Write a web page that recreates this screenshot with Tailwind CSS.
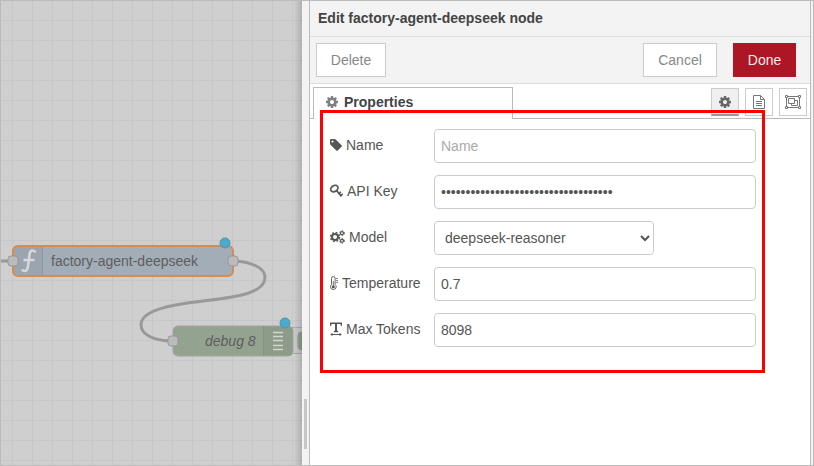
<!DOCTYPE html>
<html lang="en">
<head>
  <meta charset="UTF-8">
  <meta name="viewport" content="width=device-width, initial-scale=1.0">
  <title>Edit factory-agent-deepseek node</title>
  <script src="https://cdn.jsdelivr.net/npm/@tailwindcss/browser@4"></script>
</head>
<body class="h-screen flex overflow-hidden border border-[#bbb] bg-[#f3f3f3] font-['Liberation_Sans',Arial,sans-serif] text-sm text-[#555]">

<!-- Shared icons -->
<svg class="hidden">
  <symbol id="icon-cog" viewBox="0 0 1792 1792">
    <path d="M1152 896q0-106-75-181t-181-75-181 75-75 181 75 181 181 75 181-75 75-181zm512-109v222q0 12-8 23t-20 13l-185 28q-19 54-39 91 35 50 107 138 10 12 10 25t-9 23q-27 37-99 108t-94 71q-12 0-26-9l-138-108q-44 23-91 38-16 136-29 186-7 28-36 28h-222q-14 0-24.5-8.5t-11.5-21.5l-28-184q-49-16-90-37l-141 107q-10 9-25 9-14 0-25-11-126-114-165-168-7-10-7-23 0-12 8-23 15-21 51-66.5t54-70.5q-27-50-41-99l-183-27q-13-2-21-12.5t-8-23.5v-222q0-12 8-23t19-13l186-28q14-46 39-92-40-57-107-138-10-12-10-24 0-10 9-23 26-36 98.5-107.5t94.5-71.5q13 0 26 10l138 107q44-23 91-38 16-136 29-186 7-28 36-28h222q14 0 24.5 8.5t11.5 21.5l28 184q49 16 90 37l142-107q9-9 24-9 13 0 25 10 129 119 165 170 7 8 7 22 0 12-8 23-15 21-51 66.5t-54 70.5q26 50 41 98l183 28q13 2 21 12.5t8 23.5z"/>
  </symbol>
</svg>

<!-- Workspace -->
<main class="relative flex-1 min-w-0 overflow-hidden border-l border-[#c4c4c4] bg-[#cfcfcf] -ml-px">
  <svg class="block w-full h-full" font-size="14">
    <defs>
      <pattern id="grid" x="11" y="19" width="20" height="20" patternUnits="userSpaceOnUse">
        <path d="M0 .5H20M.5 0V20" fill="none" stroke="#c7c7c7"/>
      </pattern>
    </defs>
    <rect width="100%" height="100%" fill="url(#grid)"/>

    <g transform="translate(-1 -1)">
      <!-- Wires -->
      <g fill="none" stroke="#999" stroke-width="3">
        <path d="M0 261H12"/>
        <path d="M234 261C252 262 265 268 265 277C265 294 235 297 203 301C170 305 141 310 141 325C141 335 155 341 172 341"/>
      </g>

      <!-- factory-agent-deepseek -->
      <rect x="13" y="246" width="220" height="30" rx="5" fill="#a3adb7" stroke="#d38d50" stroke-width="2"/>
      <path d="M14 251q0-4 4-4H42V275H18q-4 0-4-4z" fill="#9ba4af"/>
      <path d="M42.500 247V275" stroke="#8f98a2"/>
      <path d="M35.500 252.500Q34.500 250.500 32.500 250.500Q30 250.500 29.500 254.500L28 266Q27.300 271 24.800 271Q23 271 22 269.500M23.500 260H34.500" fill="none" stroke="#d6d8da" stroke-width="2.600"/>
      <text x="51" y="266" fill="#5e5e5e">factory-agent-deepseek</text>
      <g fill="#bbb" stroke="#979797">
        <rect x="8" y="256" width="10" height="10" rx="3"/>
        <rect x="228" y="256" width="10" height="10" rx="3"/>
      </g>
      <circle cx="225" cy="243" r="5" fill="#4aaacf" stroke="#5c8fa5"/>

      <!-- debug 8 -->
      <rect x="288" y="327.500" width="30" height="26" rx="4" fill="#cacaca" stroke="#aaa"/>
      <rect x="298" y="332" width="16" height="18" rx="4" fill="#93a28f" stroke="#999"/>
      <rect x="173" y="326" width="120" height="30" rx="5" fill="#94a390" stroke="#a2a5a1"/>
      <path d="M264 326.500H288q4.500 0 4.500 4.500V351q0 4.500-4.500 4.500H264z" fill="#8d9c89"/>
      <path d="M263.500 326V356" stroke="#849281"/>
      <path d="M273 332.500H283M273 336.500H283M273 340.500H283M273 345.500H283M273 349.500H283" stroke="#d3d6d2" stroke-width="1.500"/>
      <text x="205" y="346" fill="#5e5e5e" font-style="italic">debug 8</text>
      <rect x="168" y="336" width="10" height="10" rx="3" fill="#bbb" stroke="#979797"/>
      <circle cx="285" cy="323" r="5" fill="#4aaacf" stroke="#5c8fa5"/>
    </g>
  </svg>
  <div class="absolute inset-y-0 right-0 w-2 bg-linear-to-r from-transparent to-black/15"></div>
</main>

<!-- Resize handle -->
<div class="flex w-[7px] shrink-0 flex-col items-center justify-end bg-[#f3f3f3] pb-4">
  <div class="h-[50px] w-[3px] bg-[#c6c6c6]"></div>
</div>

<!-- Edit tray -->
<section class="flex w-[502px] shrink-0 flex-col border-x border-[#bbb] bg-white mr-[2px]">
  <header class="h-9 border-b border-[#ddd] bg-[#f3f3f3] px-2 leading-[34px]">
    <h1 class="font-bold text-[#444]">Edit factory-agent-deepseek node</h1>
  </header>

  <div class="flex h-[47px] items-center border-b border-[#ddd] bg-[#f3f3f3] pl-1.5 pr-3.5">
    <button type="button" class="mr-auto h-[34px] w-[70px] border border-[#ccc] bg-white text-[#888]">Delete</button>
    <button type="button" class="mr-4 h-[34px] w-[74px] border border-[#ccc] bg-white text-[#888]">Cancel</button>
    <button type="button" class="h-[34px] w-[63px] bg-[#ad1625] text-[#eee]">Done</button>
  </div>

  <!-- Tabs -->
  <div class="flex h-[35px]">
    <div class="w-[3px] border-b border-[#bbb]"></div>
    <a href="#properties" class="mt-[3px] flex w-[200px] items-center gap-[5px] border border-b-0 border-[#bbb] bg-white pb-[3px] pl-[11px] font-bold text-[#444]">
      <svg class="size-[14px] fill-[#808080]"><use href="#icon-cog"/></svg>
      Properties
    </a>
    <div class="flex flex-1 items-start justify-end gap-1.5 border-b border-[#bbb] pr-[3px] pt-1">
      <button type="button" aria-label="Properties" class="grid h-7 w-7 place-items-center border border-b-2 border-[#ccc] border-b-[#999] bg-[#efefef]">
        <svg class="size-[14px] fill-[#666]"><use href="#icon-cog"/></svg>
      </button>
      <button type="button" aria-label="Description" class="grid h-7 w-7 place-items-center border border-[#ccc] bg-white">
        <svg class="h-[14px] w-3" viewBox="0 0 12 14" fill="none" stroke="#777"><path d="M.5.5H7.500L11.500 4.500V13.500H.5zM7.500.5V4.500H11.500M3 6.500H9M3 8.500H9M3 10.500H9"/></svg>
      </button>
      <button type="button" aria-label="Appearance" class="grid h-7 w-7 place-items-center border border-[#ccc] bg-white">
        <svg class="h-[14px] w-4" viewBox="0 0 16 14" fill="none" stroke="#777"><path d="M2.500 1.500H13.500M2.500 12.500H13.500M1.500 2.500V11.500M14.500 2.500V11.500M3.500 3.500H9.500V8.500H3.500zM9.500 5.500H12.500V10.500H6.500V8.500"/><path fill="#fff" d="M.5.5H2.500V2.500H.5zM13.500.5H15.500V2.500H13.500zM.5 11.500H2.500V13.500H.5zM13.500 11.500H15.500V13.500H13.500z"/></svg>
      </button>
    </div>
  </div>

  <!-- Properties form -->
  <form id="properties" class="relative flex flex-col gap-3 px-5 pt-2.5 pb-[26px]">
    <div class="flex h-[34px]">
      <label for="name" class="flex w-[104px] shrink-0 items-center gap-1 pb-0.5 whitespace-nowrap">
        <svg class="h-[14px] w-3 fill-[#555]" viewBox="128 0 1536 1792"><path d="M576 448q0-53-37.500-90.500t-90.500-37.500-90.500 37.500-37.500 90.500 37.500 90.500 90.500 37.500 90.500-37.500 37.500-90.500zm1067 576q0 53-37 90l-491 492q-39 37-91 37-53 0-90-37l-715-716q-38-37-64.500-101t-26.500-117v-416q0-52 38-90t90-38h416q53 0 117 26.500t102 64.500l715 714q37 39 37 91z"/></svg>
        Name
      </label>
      <input id="name" type="text" placeholder="Name" class="w-[70%] rounded border border-[#ccc] px-1.5 placeholder:text-[#aaa]">
    </div>
    <div class="flex h-[34px]">
      <label for="api-key" class="flex w-[104px] shrink-0 items-center gap-1 pb-0.5 whitespace-nowrap">
        <svg class="h-[14px] w-[13px]" viewBox="0 0 13 14" fill="none" stroke="#555"><ellipse cx="4.300" cy="4.600" rx="3.900" ry="2.900" stroke-width="1.700" transform="rotate(-35 4.300 4.600)"/><path stroke-width="1.800" d="M6.500 6.500L11.500 12.300"/><path stroke-width="1.500" d="M8.800 9.600L11 7.700M10.600 11.800L12.900 9.800"/></svg>
        API Key
      </label>
      <input id="api-key" type="password" value="sk-00000000000000000000000000000000" class="w-[70%] rounded border border-[#ccc] px-1.5">
    </div>
    <div class="flex h-[34px]">
      <label for="model" class="flex w-[104px] shrink-0 items-center gap-1 pb-0.5 whitespace-nowrap">
        <svg class="h-[14px] w-[15px]" viewBox="0 0 15 14" fill="none" stroke="#555"><circle cx="5" cy="7" r="3" stroke-width="2"/><circle cx="5" cy="7" r="4.500" stroke-width="1.500" stroke-dasharray="1.770 1.770"/><circle cx="12" cy="3.200" r="1.500" stroke-width="1.200"/><circle cx="12" cy="3.200" r="2.400" stroke-width="1" stroke-dasharray="1.250 1.250"/><circle cx="12" cy="10.800" r="1.500" stroke-width="1.200"/><circle cx="12" cy="10.800" r="2.400" stroke-width="1" stroke-dasharray="1.250 1.250"/></svg>
        Model
      </label>
      <select id="model" class="w-[220px] rounded border border-[#ccc] bg-white pl-1.5 pr-0.5">
        <option>deepseek-reasoner</option>
      </select>
    </div>
    <div class="flex h-[34px]">
      <label for="temperature" class="flex w-[104px] shrink-0 items-center gap-1 pb-0.5 whitespace-nowrap">
        <svg class="h-[14px] w-2" viewBox="0 0 8 14" fill="none" stroke="#555"><path stroke-width=".9" d="M1.500 8.500V2.300Q1.500.5 3.300.5T5.100 2.300V8.500Q6.200 9.500 6.200 10.800Q6.200 13.500 3.300 13.500T.5 10.800Q.5 9.500 1.500 8.500z"/><path stroke-width=".8" d="M3.300 5V10M6.200 2.500H8M6.200 4.500H8M6.200 6.500H8"/><circle cx="3.300" cy="10.800" r="1.500" fill="#555" stroke="none"/></svg>
        Temperature
      </label>
      <input id="temperature" type="text" value="0.7" class="w-[70%] rounded border border-[#ccc] px-1.5">
    </div>
    <div class="flex h-[34px]">
      <label for="max-tokens" class="flex w-[104px] shrink-0 items-center gap-1 pb-0.5 whitespace-nowrap">
        <svg class="h-[14px] w-3" viewBox="0 0 12 14" fill="none" stroke="#555"><path d="M.7 3.800V1.300H11.300V3.800M3.800 9.500H8.200" stroke-width="1.400"/><path d="M6 1.200V9.500" stroke-width="2"/><path d="M1 12.500H11"/><path d="M2.500 10.900V14L0 12.500zM9.500 10.900V14L12 12.500z" fill="#555" stroke="none"/></svg>
        Max Tokens
      </label>
      <input id="max-tokens" type="text" value="8098" class="w-[70%] rounded border border-[#ccc] px-1.5">
    </div>

    <!-- Highlight around the fields -->
    <div class="pointer-events-none absolute -top-[9px] right-[45px] bottom-0 left-2.5 border-3 border-[#f00]"></div>
  </form>
</section>

</body>
</html>
